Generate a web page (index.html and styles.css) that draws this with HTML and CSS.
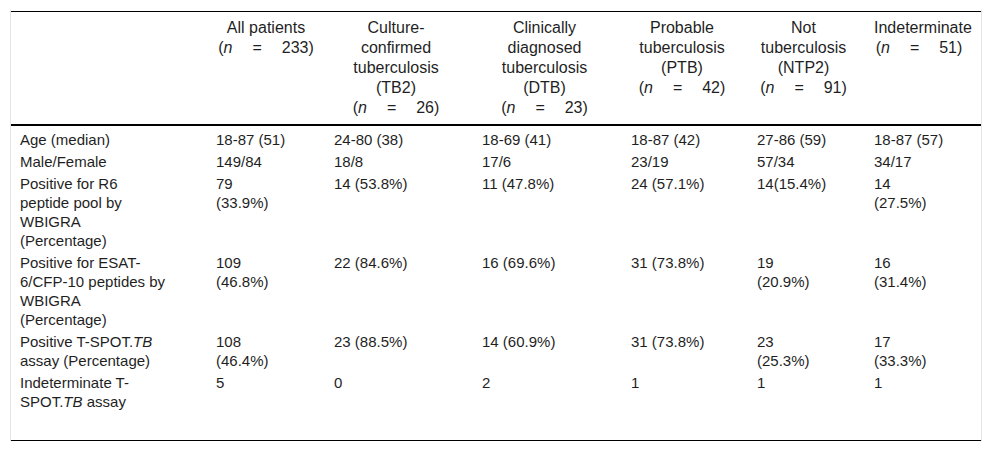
FILE: index.html
```html
<!DOCTYPE html>
<html lang="en">
<head>
<meta charset="utf-8">
<title>Table</title>
<link rel="stylesheet" href="styles.css">
</head>
<body>
<div class="table-wrap">
  <table class="data">
    <colgroup>
      <col class="c0"><col class="c1"><col class="c2"><col class="c3"><col class="c4"><col class="c5"><col class="c6">
    </colgroup>
    <thead>
      <tr>
        <th class="h0"></th>
        <th class="h1">All patients<br>(<i>n</i><span class="eq">=</span>233)</th>
        <th class="h2">Culture-<br>confirmed<br>tuberculosis<br>(TB2)<br>(<i>n</i><span class="eq">=</span>26)</th>
        <th class="h3">Clinically<br>diagnosed<br>tuberculosis<br>(DTB)<br>(<i>n</i><span class="eq">=</span>23)</th>
        <th class="h4">Probable<br>tuberculosis<br>(PTB)<br>(<i>n</i><span class="eq">=</span>42)</th>
        <th class="h5">Not<br>tuberculosis<br>(NTP2)<br>(<i>n</i><span class="eq">=</span>91)</th>
        <th class="h6">Indeterminate<br>(<i>n</i><span class="eq">=</span>51)</th>
      </tr>
    </thead>
    <tbody>
      <tr>
        <td>Age (median)</td><td>18-87 (51)</td><td>24-80 (38)</td><td>18-69 (41)</td><td>18-87 (42)</td><td>27-86 (59)</td><td>18-87 (57)</td>
      </tr>
      <tr>
        <td>Male/Female</td><td>149/84</td><td>18/8</td><td>17/6</td><td>23/19</td><td>57/34</td><td>34/17</td>
      </tr>
      <tr>
        <td>Positive for R6<br>peptide pool by<br>WBIGRA<br>(Percentage)</td><td>79<br>(33.9%)</td><td>14 (53.8%)</td><td>11 (47.8%)</td><td>24 (57.1%)</td><td>14(15.4%)</td><td>14<br>(27.5%)</td>
      </tr>
      <tr>
        <td>Positive for ESAT-<br>6/CFP-10 peptides by<br>WBIGRA<br>(Percentage)</td><td>109<br>(46.8%)</td><td>22 (84.6%)</td><td>16 (69.6%)</td><td>31 (73.8%)</td><td>19<br>(20.9%)</td><td>16<br>(31.4%)</td>
      </tr>
      <tr>
        <td>Positive T-SPOT.<i>TB</i><br>assay (Percentage)</td><td>108<br>(46.4%)</td><td>23 (88.5%)</td><td>14 (60.9%)</td><td>31 (73.8%)</td><td>23<br>(25.3%)</td><td>17<br>(33.3%)</td>
      </tr>
      <tr class="last">
        <td>Indeterminate T-<br>SPOT.<i>TB</i> assay</td><td>5</td><td>0</td><td>2</td><td>1</td><td>1</td><td>1</td>
      </tr>
    </tbody>
  </table>
</div>
</body>
</html>
```
FILE: styles.css
```css
html, body {
  margin: 0;
  padding: 0;
  background: #fff;
}
body {
  font-family: "Liberation Sans", Arial, sans-serif;
  font-size: 15px;
  line-height: 19px;
  color: #1f1f1f;
}
.table-wrap {
  margin: 10px 10px 0;
  padding-top: 1px;
  border-left: 1px solid #e4e4e4;
  border-right: 1px solid #e4e4e4;
}
.data {
  width: 970px;
  table-layout: fixed;
  border-collapse: collapse;
  border-top: 1px solid #000;
  border-bottom: 1px solid #000;
}
.c0 { width: 198px; }
.c1 { width: 118px; }
.c2 { width: 148px; }
.c3 { width: 149px; }
.c4 { width: 126px; }
.c5 { width: 117px; }
.c6 { width: 114px; }
.data th {
  font-weight: normal;
  font-size: 16px;
  line-height: 20px;
  text-align: center;
  vertical-align: top;
  padding: 6px 17px 6px 7px;
  border-bottom: 2px solid #000;
}
.data th.h1 {
  padding-right: 11px;
}
.data td {
  text-align: left;
  vertical-align: top;
  padding: 2px 7px 1px 7px;
}
.data td:first-child {
  padding-left: 9px;
}
.data tbody tr:first-child td {
  padding-top: 4px;
}
.data tr.last td {
  padding-bottom: 29px;
}
.eq {
  margin: 0 20px;
}
```
